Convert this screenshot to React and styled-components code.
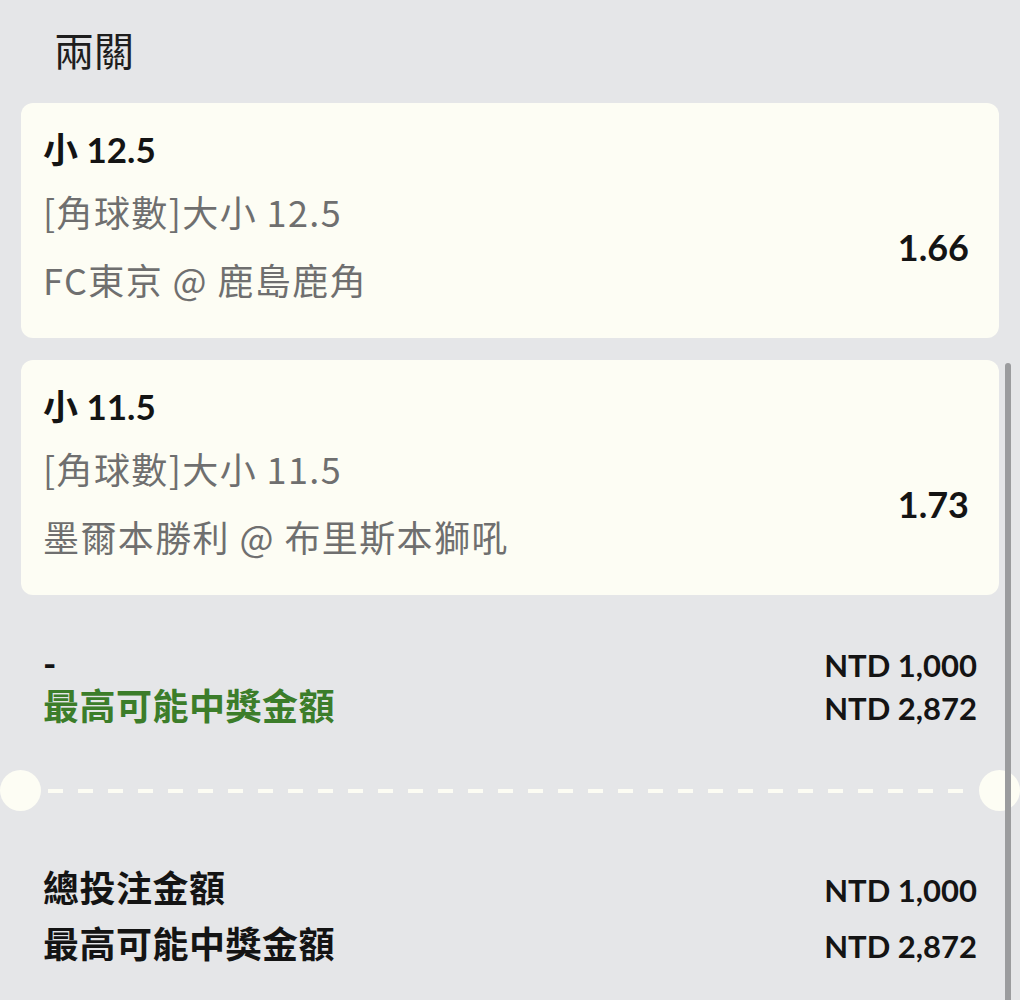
import React from 'react';
import styled, { createGlobalStyle } from 'styled-components';

const GlobalStyle = createGlobalStyle`
  html, body {
    margin: 0;
    padding: 0;
    background: #e5e6e8;
  }
  body {
    font-family: Lato, "Noto Sans CJK TC", sans-serif;
    color: #111;
  }
`;

const colors = {
  page: '#e5e6e8',
  card: '#fdfdf4',
  grey: '#6f6f6f',
  green: '#3c7d2a',
  text: '#141414',
  scroll: '#9b9c9e',
};

const Page = styled.div`
  width: 1020px;
  min-height: 1000px;
  overflow: hidden;
`;

const Header = styled.div`
  padding: 19px 0 24px 54px;
  font-family: "Noto Sans CJK TC", sans-serif;
  font-size: 40px;
  line-height: 60px;
  font-weight: 400;
  color: #1e1e1e;
`;

const Legs = styled.div`
  display: flex;
  flex-direction: column;
  gap: 22px;
  padding: 0 21px;
`;

const Card = styled.div`
  display: flex;
  align-items: center;
  justify-content: space-between;
  background: ${colors.card};
  border-radius: 12px;
  padding: 16px 30px 23px 22px;
`;

const Info = styled.div`
  display: flex;
  flex-direction: column;
`;

const Selection = styled.div`
  font-size: 35px;
  font-weight: 700;
  line-height: 60px;
  color: ${colors.text};
`;

const Detail = styled.div`
  font-family: "Noto Sans CJK TC", sans-serif;
  font-size: 36px;
  letter-spacing: 1.4px;
  line-height: ${(p) => p.$lh}px;
  color: ${colors.grey};
`;

const Odds = styled.div`
  margin-top: 60px;
  font-size: 36px;
  font-weight: 700;
  color: ${colors.text};
`;

const Summary = styled.div`
  display: flex;
  flex-direction: column;
  padding: ${(p) => p.$pad};
`;

const Row = styled.div`
  display: flex;
  justify-content: space-between;
  align-items: baseline;
  line-height: ${(p) => p.$lh}px;
`;

const Label = styled.span`
  font-family: Lato, "Noto Sans CJK TC", sans-serif;
  font-size: 36px;
  font-weight: 700;
  letter-spacing: 0.5px;
  color: ${(p) => (p.$green ? colors.green : colors.text)};
`;

const Amount = styled.span`
  font-size: 31px;
  font-weight: 700;
  color: ${colors.text};
`;

const Divider = styled.div`
  display: flex;
  align-items: center;
  margin: 41px 0 0;
`;

const Notch = styled.div`
  width: 41px;
  height: 41px;
  border-radius: 50%;
  background: ${colors.card};
  flex: none;
`;

const Dashes = styled.div`
  flex: 1;
  height: 4px;
  margin: 0 7px;
  background: repeating-linear-gradient(
    to right,
    ${colors.card} 0 15px,
    transparent 15px 30px
  );
`;

const ScrollThumb = styled.div`
  position: fixed;
  left: 1005px;
  top: 363px;
  width: 6px;
  height: 660px;
  border-radius: 3px;
  background: ${colors.scroll};
`;

const legs = [
  {
    pick: '小 12.5',
    market: '[角球數]大小 12.5',
    match: 'FC東京 @ 鹿島鹿角',
    odds: '1.66',
  },
  {
    pick: '小 11.5',
    market: '[角球數]大小 11.5',
    match: '墨爾本勝利 @ 布里斯本獅吼',
    odds: '1.73',
  },
];

const App = () => {
  return (
    <Page>
      <GlobalStyle />
      <Header>兩關</Header>
      <Legs>
        {legs.map((leg) => (
          <Card key={leg.pick}>
            <Info>
              <Selection>{leg.pick}</Selection>
              <Detail $lh={64}>{leg.market}</Detail>
              <Detail $lh={72}>{leg.match}</Detail>
            </Info>
            <Odds>{leg.odds}</Odds>
          </Card>
        ))}
      </Legs>
      <Summary $pad="48px 43px 0">
        <Row $lh={41}>
          <Label>-</Label>
          <Amount>NTD 1,000</Amount>
        </Row>
        <Row $lh={41}>
          <Label $green>最高可能中獎金額</Label>
          <Amount>NTD 2,872</Amount>
        </Row>
      </Summary>
      <Divider>
        <Notch />
        <Dashes />
        <Notch />
      </Divider>
      <Summary $pad="50px 43px 0">
        <Row $lh={54}>
          <Label>總投注金額</Label>
          <Amount>NTD 1,000</Amount>
        </Row>
        <Row $lh={54}>
          <Label>最高可能中獎金額</Label>
          <Amount>NTD 2,872</Amount>
        </Row>
      </Summary>
      <ScrollThumb />
    </Page>
  );
};

export default App;
